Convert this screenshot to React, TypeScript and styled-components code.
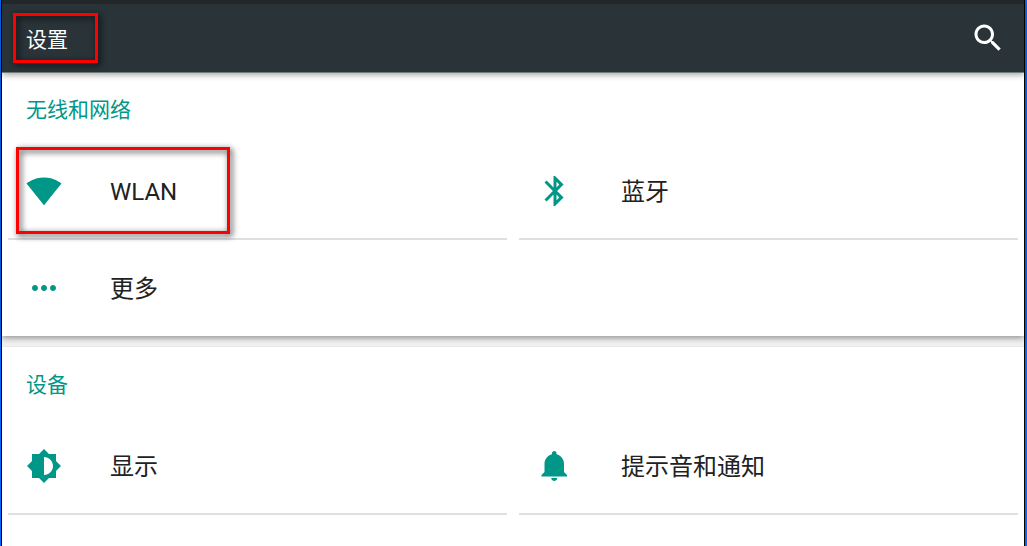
import React from "react";
import styled, { createGlobalStyle, css } from "styled-components";

const teal = "#009688";

const GlobalStyle = createGlobalStyle`
  *, *::before, *::after { box-sizing: border-box; }
  body {
    margin: 0;
    background: #fff;
    color: #212121;
    font-family: Roboto, "Noto Sans CJK SC", sans-serif;
  }
`;

const WindowFrame = styled.div`
  display: flex;
  min-height: 100vh;
  border: solid #0868f7;
  border-width: 0 2px 0 1px;
`;

const Screen = styled.div`
  display: flex;
  flex-direction: column;
  flex: 1;
  min-width: 0;
  border: solid #000;
  border-width: 0 1px;
  background: #f1f1f1;
`;

const AppBar = styled.header`
  position: relative;
  z-index: 1;
  display: flex;
  align-items: center;
  justify-content: space-between;
  height: 72px;
  padding: 0 18px 0 24px;
  border-top: 4px solid #22272a;
  background: #293338;
  box-shadow: 0 1px 0 #727b7b, 0 3px 6px rgba(0, 0, 0, 0.35);
`;

const AppTitle = styled.h1`
  margin: 0;
  padding-top: 4px;
  color: #fff;
  font-size: 21px;
  font-weight: 400;
  line-height: 32px;
`;

const SearchButton = styled.button`
  display: flex;
  padding: 0;
  border: 0;
  background: none;
  color: #fff;
  cursor: pointer;
`;

const Main = styled.main`
  display: flex;
  flex-direction: column;
  flex: 1;
  gap: 11px;
`;

const Card = styled.section<{ $fill?: boolean }>`
  background: #fff;
  box-shadow: 0 2px 6px rgba(0, 0, 0, 0.4);
  ${({ $fill }) =>
    $fill &&
    css`
      flex: 1;
      box-shadow: 0 -1px 0 #e9e9e9;
    `}
`;

const CardTitle = styled.h2`
  margin: 0;
  padding: 22px 24px 18px;
  color: ${teal};
  font-size: 21px;
  font-weight: 400;
  line-height: 32px;
`;

const Tiles = styled.ul`
  display: grid;
  grid-template-columns: 1fr 1fr;
  margin: 0;
  padding: 0;
  list-style: none;
`;

const Tile = styled.li`
  position: relative;
  padding: 0 6px;
`;

const TileLink = styled.a<{ $divided?: boolean }>`
  display: flex;
  align-items: center;
  gap: 48px;
  height: 96px;
  padding: 0 18px;
  border-bottom: ${({ $divided }) => ($divided ? "2px solid #e0e0e0" : "0")};
  color: inherit;
  text-decoration: none;
`;

const TileLabel = styled.span`
  padding-top: 2px;
  font-size: 24px;
  line-height: 36px;
`;

const Highlight = styled.span<{ $x: number; $y: number; $w: number; $h: number }>`
  position: absolute;
  left: ${({ $x }) => $x}px;
  top: ${({ $y }) => $y}px;
  width: ${({ $w }) => $w}px;
  height: ${({ $h }) => $h}px;
  border: 3px solid #fe0000;
  filter: drop-shadow(2px 2px 3px rgba(0, 0, 0, 0.8));
  pointer-events: none;
`;

const Glyph = styled.svg`
  flex: none;
  width: 36px;
  height: 36px;
  fill: currentColor;
`;

const TileGlyph = styled(Glyph)`
  color: ${teal};
`;

const paths = {
  search:
    "M15.5 14h-.79l-.28-.27C15.41 12.59 16 11.11 16 9.5 16 5.91 13.09 3 9.5 3S3 5.91 3 9.5 5.91 16 9.5 16c1.61 0 3.09-.59 4.23-1.57l.27.28v.79l5 4.99L20.49 19l-4.99-5zm-6 0C7.01 14 5 11.99 5 9.5S7.01 5 9.5 5 14 7.01 14 9.5 11.99 14 9.5 14z",
  wifi: "M12.01 21.49L23.64 7c-.45-.34-4.93-4-11.64-4C5.28 3 .81 6.66.36 7l11.63 14.49.01.01.01-.01z",
  bluetooth:
    "M17.71 7.71L12 2h-1v7.59L6.41 5 5 6.41 10.59 12 5 17.59 6.41 19 11 14.41V22h1l5.71-5.71-4.3-4.29 4.3-4.29zM13 5.83l1.88 1.88L13 9.59V5.83zm1.88 10.46L13 18.17v-3.76l1.88 1.88z",
  more: "M6 10c-1.1 0-2 .9-2 2s.9 2 2 2 2-.9 2-2-.9-2-2-2zm12 0c-1.1 0-2 .9-2 2s.9 2 2 2 2-.9 2-2-.9-2-2-2zm-6 0c-1.1 0-2 .9-2 2s.9 2 2 2 2-.9 2-2-.9-2-2-2z",
  display:
    "M20 15.31L23.31 12 20 8.69V4h-4.69L12 .69 8.69 4H4v4.69L.69 12 4 15.31V20h4.69L12 23.31 15.31 20H20v-4.69zM12 18V6c3.31 0 6 2.69 6 6s-2.69 6-6 6z",
  bell: "M11.5 22c1.1 0 2-.9 2-2h-4c0 1.1.9 2 2 2zm6.5-6v-5.5c0-3.07-2.13-5.64-5-6.32V3.5c0-.83-.67-1.5-1.5-1.5S10 2.67 10 3.5v.68c-2.87.68-5 3.25-5 6.32V16l-2 2v1h17v-1l-2-2z",
};

type Item = {
  icon: keyof typeof paths;
  label: string;
  divided?: boolean;
  marked?: boolean;
};

const wireless: Item[] = [
  { icon: "wifi", label: "WLAN", divided: true, marked: true },
  { icon: "bluetooth", label: "蓝牙", divided: true },
  { icon: "more", label: "更多" },
];

const device: Item[] = [
  { icon: "display", label: "显示", divided: true },
  { icon: "bell", label: "提示音和通知", divided: true },
];

function Section({ title, items, fill }: { title: string; items: Item[]; fill?: boolean }) {
  return (
    <Card $fill={fill}>
      <CardTitle>{title}</CardTitle>
      <Tiles>
        {items.map(({ icon, label, divided, marked }) => (
          <Tile key={icon}>
            <TileLink href={`#${icon}`} $divided={divided}>
              <TileGlyph viewBox="0 0 24 24" aria-hidden="true">
                <path d={paths[icon]} />
              </TileGlyph>
              <TileLabel>{label}</TileLabel>
            </TileLink>
            {marked && <Highlight $x={14} $y={3} $w={214} $h={87} />}
          </Tile>
        ))}
      </Tiles>
    </Card>
  );
}

export default function App() {
  return (
    <>
      <GlobalStyle />
      <WindowFrame>
        <Screen>
          <AppBar>
            <AppTitle>设置</AppTitle>
            <SearchButton type="button" aria-label="搜索">
              <Glyph viewBox="0 0 24 24" aria-hidden="true">
                <path d={paths.search} />
              </Glyph>
            </SearchButton>
            <Highlight $x={11} $y={9} $w={85} $h={50} />
          </AppBar>
          <Main>
            <Section title="无线和网络" items={wireless} />
            <Section title="设备" items={device} fill />
          </Main>
        </Screen>
      </WindowFrame>
    </>
  );
}
